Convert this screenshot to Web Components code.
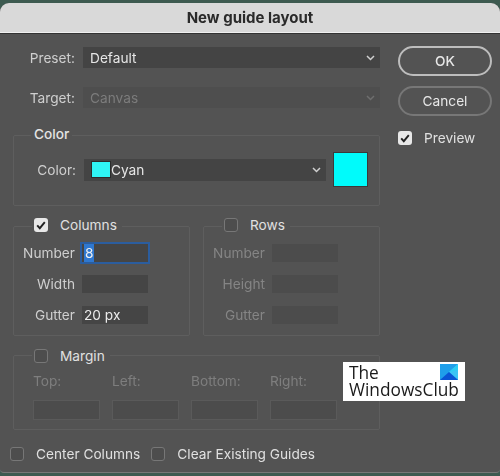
<!DOCTYPE html>
<html>
<head>
<meta charset="utf-8">
<title>New guide layout</title>
<style>
  html, body { margin: 0; height: 100%; background: #3d5a50; }
  body { font-family: "Inter", "Liberation Sans", sans-serif; }
</style>
</head>
<body>
<guide-dialog>
  <ps-row slot="main" label="Preset:">
    <ps-select value="Default"></ps-select>
  </ps-row>
  <ps-row slot="main" label="Target:">
    <ps-select value="Canvas" disabled></ps-select>
  </ps-row>

  <ps-group slot="main" legend="Color">
    <color-row></color-row>
  </ps-group>

  <div slot="main" class="pair">
    <ps-group legend="Columns" checkable checked>
      <ps-field label="Number" value="8" focused></ps-field>
      <ps-field label="Width"></ps-field>
      <ps-field label="Gutter" value="20 px"></ps-field>
    </ps-group>
    <ps-group legend="Rows" checkable>
      <ps-field label="Number" disabled></ps-field>
      <ps-field label="Height" disabled></ps-field>
      <ps-field label="Gutter" disabled></ps-field>
    </ps-group>
  </div>

  <ps-group slot="main" legend="Margin" checkable>
    <margin-grid></margin-grid>
  </ps-group>

  <ps-button slot="side" primary>OK</ps-button>
  <ps-button slot="side">Cancel</ps-button>
  <ps-check slot="side" checked class="preview">Preview</ps-check>

  <ps-check slot="foot">Center Columns</ps-check>
  <ps-check slot="foot">Clear Existing Guides</ps-check>

  <club-logo slot="overlay"></club-logo>
</guide-dialog>

<script>
const chevron = `<svg width="9" height="6" viewBox="0 0 9 6"><path d="M1 1l3.5 3.5L8 1" fill="none" stroke="currentColor" stroke-width="1.5"/></svg>`;

customElements.define('guide-dialog', class GuideDialog extends HTMLElement {
  constructor() {
    super();
    this.attachShadow({ mode: 'open' }).innerHTML = `
      <style>
        :host {
          display: flex;
          flex-direction: column;
          box-sizing: border-box;
          width: 500px;
          height: 470px;
          margin-top: 3px;
          position: relative;
          background: #535353;
          border-radius: 9px 9px 4px 4px;
          border-bottom: 1px solid #777;
          overflow: hidden;
          color: #dcdcdc;
          font-size: 13.7px;
          filter: blur(.45px);
        }
        header {
          height: 29px;
          flex: none;
          background: #d9d9d9;
          border-bottom: 1px solid #f0f0f0;
          box-shadow: 0 1px 0 #333;
          display: flex;
          align-items: center;
          justify-content: center;
          color: #2a2a2a;
          font-weight: 700;
          font-size: 15px;
        }
        .body { display: flex; padding: 14px 8px 0 13px; gap: 18px; }
        .main { width: 367px; display: flex; flex-direction: column; }
        .side { flex: 1; display: flex; flex-direction: column; gap: 10px; margin-top: -1px; }
        footer { display: flex; gap: 11px; padding: 16px 0 0 10px; }
        ::slotted(.pair) { display: flex; gap: 13px; margin-top: 20px; }
        ::slotted(.preview) { margin-top: 4px; }
      </style>
      <header>New guide layout</header>
      <div class="body">
        <div class="main"><slot name="main"></slot></div>
        <div class="side"><slot name="side"></slot></div>
      </div>
      <footer><slot name="foot"></slot></footer>
      <slot name="overlay"></slot>
    `;
  }
});

customElements.define('ps-row', class PsRow extends HTMLElement {
  constructor() {
    super();
    this.attachShadow({ mode: 'open' }).innerHTML = `
      <style>
        :host { display: flex; align-items: center; gap: 8px; margin-bottom: 19px; height: 21px; }
        :host([label="Target:"]) { margin-bottom: 0; }
        label { width: 62px; text-align: right; white-space: nowrap; color: #cfcfcf; }
        div { flex: 1; min-width: 0; }
      </style>
      <label>${this.getAttribute('label')}</label><div><slot></slot></div>
    `;
  }
});

customElements.define('ps-select', class PsSelect extends HTMLElement {
  constructor() {
    super();
    const dim = this.hasAttribute('disabled');
    this.attachShadow({ mode: 'open' }).innerHTML = `
      <style>
        :host {
          display: flex; align-items: center; justify-content: space-between;
          height: 21px; padding: 0 5px 0 7px; box-sizing: border-box;
          background: ${dim ? '#4e4e4e' : '#444'};
          color: ${dim ? '#7c7c7c' : '#e6e6e6'};
        }
        span { display: flex; align-items: center; }
        svg { color: ${dim ? '#6e6e6e' : '#d0d0d0'}; }
      </style>
      <span><slot></slot>${this.getAttribute('value')}</span>${chevron}
    `;
  }
});

customElements.define('color-row', class ColorRow extends HTMLElement {
  constructor() {
    super();
    this.attachShadow({ mode: 'open' }).innerHTML = `
      <style>
        :host { display: flex; align-items: center; gap: 8px; }
        label { width: 62px; margin-left: -20px; text-align: right; color: #cfcfcf; }
        ps-select { width: 242px; height: 22px; }
        i { display: block; width: 20px; height: 17px; background: #2ff5f5; border: 1px solid #2c2c2c; box-sizing: border-box; }
        b { display: block; width: 35px; height: 35px; margin-left: -1px; background: #00fbfb; box-sizing: border-box; border: 1px solid #3a3a3a; }
      </style>
      <label>Color:</label>
      <ps-select value="Cyan"><i></i></ps-select>
      <b></b>
    `;
  }
});

customElements.define('ps-group', class PsGroup extends HTMLElement {
  constructor() {
    super();
    const check = this.hasAttribute('checkable');
    const on = this.hasAttribute('checked');
    const legend = this.getAttribute('legend');
    this.attachShadow({ mode: 'open' }).innerHTML = `
      <style>
        :host {
          display: block; flex: 1; position: relative;
          border: 1px solid #5e5e5e; border-radius: 2px;
          margin-top: ${legend === 'Color' ? '27px' : legend === 'Margin' ? '19px' : '0'};
          padding: ${legend === 'Color' ? '16px 0 18px 20px' : legend === 'Margin' ? '18px 0 9px 20px' : '15px 0 9px 0'};
        }
        .legend {
          position: absolute; top: ${legend === 'Margin' ? '-8px' : '-10px'}; left: 18px;
          display: flex; align-items: center;
          background: #535353; padding: 0 5px 0 2px; line-height: 16px;
          color: #e4e4e4; font-weight: ${check ? 400 : 500};
        }
        .plain { left: 17px; padding: 0 3px; }
        .body { display: flex; flex-direction: column; gap: 9px; }
      </style>
      <div class="legend ${check ? '' : 'plain'}">
        ${check ? `<ps-check ${on ? 'checked' : ''}>${legend}</ps-check>` : legend}
      </div>
      <div class="body"><slot></slot></div>
    `;
  }
});

customElements.define('ps-field', class PsField extends HTMLElement {
  constructor() {
    super();
    const dim = this.hasAttribute('disabled');
    const focused = this.hasAttribute('focused');
    const value = this.getAttribute('value') || '';
    const text = focused ? `<mark>${value}</mark>` : value;
    this.attachShadow({ mode: 'open' }).innerHTML = `
      <style>
        :host { display: flex; align-items: center; gap: 7px; height: 22px; }
        label { width: 61px; text-align: right; color: ${dim ? '#858585' : '#cfcfcf'}; }
        div {
          box-sizing: border-box; width: 66px; height: 18px; line-height: 18px; padding-left: 2px;
          background: ${dim ? '#4c4c4c' : '#454545'}; color: #ececec; white-space: nowrap;
          ${focused ? 'outline: 2px solid #2b5d9e; outline-offset: 0;' : ''}
        }
        mark { display: inline-block; background: #2f78d0; color: #f0f0f0; padding: 0 1px; }
      </style>
      <label>${this.getAttribute('label')}</label><div>${text}</div>
    `;
  }
});

customElements.define('margin-grid', class MarginGrid extends HTMLElement {
  constructor() {
    super();
    const cells = ['Top:', 'Left:', 'Bottom:', 'Right:'];
    this.attachShadow({ mode: 'open' }).innerHTML = `
      <style>
        :host { display: grid; grid-template-columns: repeat(4, 67px); column-gap: 12px; row-gap: 12px; margin-left: -1px; }
        span { color: #7e7e7e; line-height: 14px; }
        i { display: block; height: 20px; background: #4c4c4c; border: 1px solid #5a5a5a; box-sizing: border-box; }
      </style>
      ${cells.map(c => `<span>${c}</span>`).join('')}
      ${cells.map(() => '<i></i>').join('')}
    `;
  }
});

customElements.define('ps-check', class PsCheck extends HTMLElement {
  constructor() {
    super();
    const on = this.hasAttribute('checked');
    this.attachShadow({ mode: 'open' }).innerHTML = `
      <style>
        :host { display: inline-flex; align-items: center; gap: 12px; color: #e0e0e0; white-space: nowrap; }
        i {
          display: flex; align-items: center; justify-content: center;
          width: 14px; height: 14px; box-sizing: border-box; border-radius: 3px;
          background: ${on ? '#e8e8e8' : '#4d4d4d'};
          border: ${on ? '0' : '1px solid #777'};
        }
      </style>
      <i>${on ? '<svg width="10" height="9" viewBox="0 0 10 9"><path d="M1.2 4.4l2.6 2.8L8.8 1.2" fill="none" stroke="#222" stroke-width="1.9"/></svg>' : ''}</i>
      <span><slot></slot></span>
    `;
  }
});

customElements.define('ps-button', class PsButton extends HTMLElement {
  constructor() {
    super();
    this.attachShadow({ mode: 'open' }).innerHTML = `
      <style>
        :host {
          display: flex; align-items: center; justify-content: center;
          width: 94px; height: 30px; box-sizing: border-box; border-radius: 15px;
          color: #e8e8e8;
          border: 2px solid #777;
        }
        :host([primary]) { border-color: #bdbdbd; font-weight: 500; }
      </style>
      <slot></slot>
    `;
  }
});

customElements.define('club-logo', class ClubLogo extends HTMLElement {
  constructor() {
    super();
    this.attachShadow({ mode: 'open' }).innerHTML = `
      <style>
        :host {
          position: absolute; left: 343px; top: 359px;
          width: 122px; height: 39px; padding: 2px 0 0 6px; box-sizing: border-box;
          background: #fff; color: #1a1a1a;
          font-family: "Open Sans", sans-serif; font-size: 17.3px; line-height: 17px;
        }
        svg { position: absolute; left: 97px; top: 2px; }
      </style>
      The<br>WindowsClub
      <svg width="18" height="16" viewBox="0 0 18 16">
        <rect width="18" height="16" fill="#1f9fea"/>
        <path d="M18 0v16L9 8z" fill="#3cc4f4"/>
        <path d="M0 16L18 0v6L9 8z" fill="#2ccdf5"/>
        <path d="M0 16L9 8l9 8z" fill="#0a55d4"/>
      </svg>
    `;
  }
});
</script>
</body>
</html>
